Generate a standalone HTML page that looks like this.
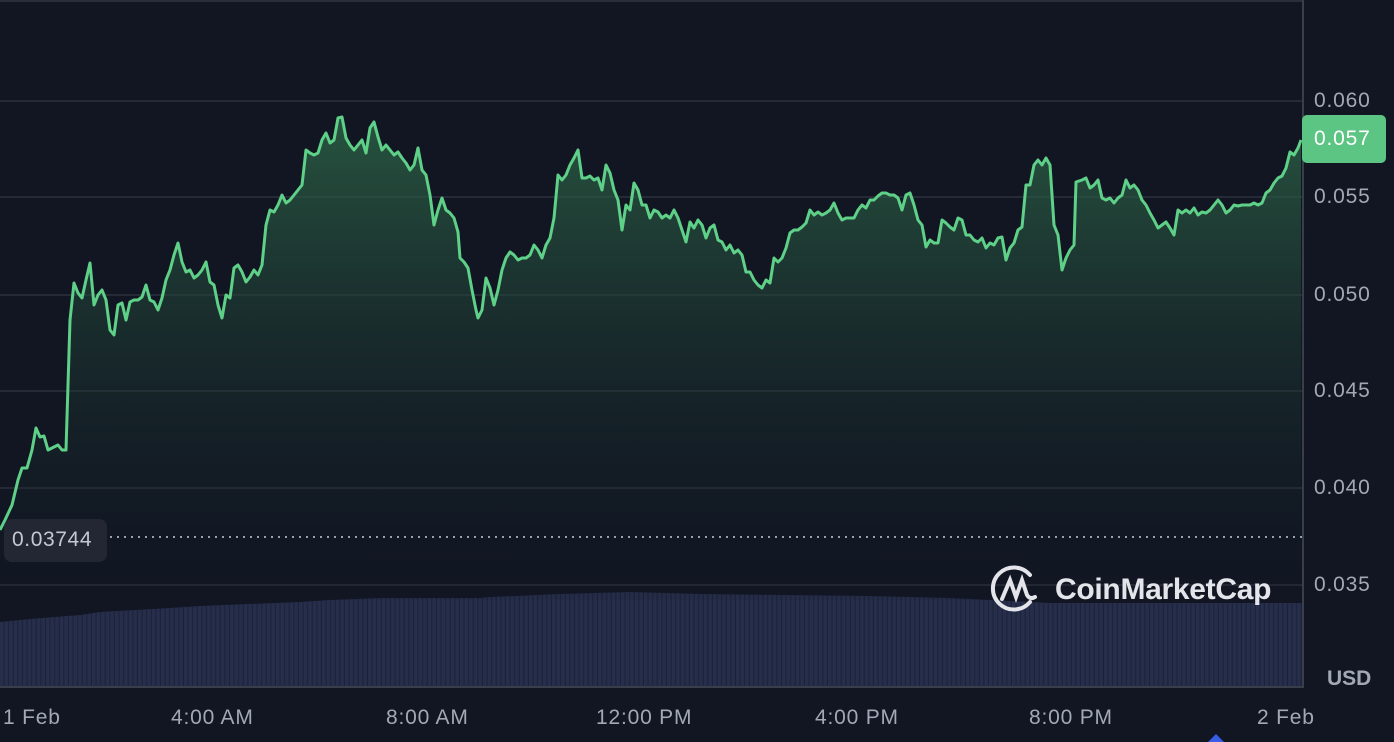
<!DOCTYPE html>
<html><head><style>
html,body{margin:0;padding:0;background:#111622;width:1394px;height:742px;overflow:hidden;font-family:"Liberation Sans",sans-serif}
.lab{position:absolute;color:#a3a8b5;font-size:21px;letter-spacing:0.8px}
</style></head><body>
<svg width="1394" height="742" style="position:absolute;left:0;top:0">
<defs>
<linearGradient id="g" x1="0" y1="0" x2="0" y2="1">
<stop offset="0" stop-color="#2f6a4a" stop-opacity="0.75"/>
<stop offset="1" stop-color="#111622" stop-opacity="0.1"/>
</linearGradient>
<pattern id="bars" width="4.6" height="10" patternUnits="userSpaceOnUse">
<rect width="3.6" height="10" fill="#262e4c"/><rect x="3.6" width="1" height="10" fill="#1c2237"/>
</pattern>
</defs>
<line x1="0" y1="1" x2="1302" y2="1" stroke="#2a2e3a" stroke-width="2"/>
<g stroke="#2c303c" stroke-width="1.5">
<line x1="0" y1="101" x2="1302" y2="101"/><line x1="0" y1="197" x2="1302" y2="197"/>
<line x1="0" y1="295" x2="1302" y2="295"/><line x1="0" y1="391" x2="1302" y2="391"/>
<line x1="0" y1="488" x2="1302" y2="488"/><line x1="0" y1="585" x2="1302" y2="585"/>
</g>
<polygon fill="url(#bars)" points="0,622 30,619 80,615 100,612 170,608 200,606 300,602 330,600 380,598 480,598 490,597 560,594 630,592 700,594 870,596 950,598 1050,603 1302,603 1302,686 0,686"/>
<path fill="url(#g)" d="M0,530 L5,520 12,505 18,480 22,468 27,468 32,450 36,428 40,437 44,436 48,450 54,447 58,445 62,450 66,450 70,320 74,283 78,293 82,298 86,280 90,263 94,305 98,295 102,290 106,300 110,330 114,335 118,305 122,303 126,320 130,302 134,300 138,300 142,297 146,285 150,300 154,302 158,310 162,298 166,280 170,270 174,255 178,243 182,262 186,272 190,270 194,278 198,275 202,270 206,262 210,282 214,285 218,305 222,318 226,295 230,298 234,268 238,265 242,272 246,282 250,277 254,270 258,275 262,265 266,225 270,210 274,212 278,205 282,195 286,203 290,200 294,195 298,190 302,185 306,150 310,153 314,155 318,153 322,140 326,133 330,143 334,140 338,118 342,117 346,138 350,145 354,150 358,145 362,140 366,153 370,128 374,122 378,137 382,150 386,145 390,150 394,155 398,152 402,158 406,163 410,170 414,165 418,148 422,170 426,175 430,195 434,225 438,210 442,198 446,210 450,213 454,218 458,232 460,258 464,262 468,268 472,290 476,310 478,318 482,310 486,278 490,288 494,305 498,290 502,270 506,258 510,252 514,255 518,260 522,258 526,258 530,255 534,245 538,250 542,258 546,245 550,238 554,218 558,175 562,180 566,175 570,165 574,158 578,150 582,178 586,178 590,176 594,180 598,178 602,190 606,165 610,173 614,190 618,200 622,230 626,205 630,210 634,183 638,190 642,205 646,205 650,218 654,210 658,212 662,218 666,215 670,218 674,210 678,218 682,230 686,242 690,222 694,228 698,220 702,225 706,238 710,228 714,225 718,240 722,242 726,250 730,245 734,253 738,250 742,255 746,272 750,272 754,280 758,285 762,288 766,280 770,283 774,258 778,262 782,258 786,248 790,233 794,230 798,230 802,227 806,223 810,210 814,215 818,212 822,215 826,213 830,210 834,203 838,213 842,220 846,218 850,218 854,218 858,210 862,205 866,208 870,200 874,200 878,196 882,193 886,193 890,195 894,195 898,198 902,210 906,195 910,193 914,205 918,220 922,225 926,247 930,240 934,243 938,243 942,220 946,223 950,227 954,230 958,218 962,220 966,235 970,235 974,240 978,242 982,238 986,248 990,243 994,245 998,238 1002,237 1006,260 1010,248 1014,243 1018,230 1022,227 1026,185 1030,185 1034,165 1038,160 1042,165 1046,158 1050,165 1054,225 1058,235 1062,270 1066,258 1070,250 1074,245 1076,182 1082,180 1086,178 1090,188 1094,185 1098,180 1102,198 1106,200 1110,198 1114,203 1118,198 1122,195 1126,180 1130,188 1134,185 1138,190 1142,200 1146,205 1150,213 1154,220 1158,228 1162,225 1166,222 1170,228 1174,235 1178,210 1182,213 1186,210 1190,213 1194,208 1198,215 1202,212 1206,213 1210,210 1214,205 1218,200 1222,205 1226,213 1230,210 1234,205 1238,206 1242,205 1246,205 1250,205 1254,203 1258,205 1262,203 1266,193 1270,190 1274,183 1278,178 1282,176 1286,168 1290,152 1294,155 1298,148 1301,140 L1301,600 0,600Z"/>
<polyline fill="none" stroke="#5ed088" stroke-width="3" stroke-linejoin="round" points="0,530 5,520 12,505 18,480 22,468 27,468 32,450 36,428 40,437 44,436 48,450 54,447 58,445 62,450 66,450 70,320 74,283 78,293 82,298 86,280 90,263 94,305 98,295 102,290 106,300 110,330 114,335 118,305 122,303 126,320 130,302 134,300 138,300 142,297 146,285 150,300 154,302 158,310 162,298 166,280 170,270 174,255 178,243 182,262 186,272 190,270 194,278 198,275 202,270 206,262 210,282 214,285 218,305 222,318 226,295 230,298 234,268 238,265 242,272 246,282 250,277 254,270 258,275 262,265 266,225 270,210 274,212 278,205 282,195 286,203 290,200 294,195 298,190 302,185 306,150 310,153 314,155 318,153 322,140 326,133 330,143 334,140 338,118 342,117 346,138 350,145 354,150 358,145 362,140 366,153 370,128 374,122 378,137 382,150 386,145 390,150 394,155 398,152 402,158 406,163 410,170 414,165 418,148 422,170 426,175 430,195 434,225 438,210 442,198 446,210 450,213 454,218 458,232 460,258 464,262 468,268 472,290 476,310 478,318 482,310 486,278 490,288 494,305 498,290 502,270 506,258 510,252 514,255 518,260 522,258 526,258 530,255 534,245 538,250 542,258 546,245 550,238 554,218 558,175 562,180 566,175 570,165 574,158 578,150 582,178 586,178 590,176 594,180 598,178 602,190 606,165 610,173 614,190 618,200 622,230 626,205 630,210 634,183 638,190 642,205 646,205 650,218 654,210 658,212 662,218 666,215 670,218 674,210 678,218 682,230 686,242 690,222 694,228 698,220 702,225 706,238 710,228 714,225 718,240 722,242 726,250 730,245 734,253 738,250 742,255 746,272 750,272 754,280 758,285 762,288 766,280 770,283 774,258 778,262 782,258 786,248 790,233 794,230 798,230 802,227 806,223 810,210 814,215 818,212 822,215 826,213 830,210 834,203 838,213 842,220 846,218 850,218 854,218 858,210 862,205 866,208 870,200 874,200 878,196 882,193 886,193 890,195 894,195 898,198 902,210 906,195 910,193 914,205 918,220 922,225 926,247 930,240 934,243 938,243 942,220 946,223 950,227 954,230 958,218 962,220 966,235 970,235 974,240 978,242 982,238 986,248 990,243 994,245 998,238 1002,237 1006,260 1010,248 1014,243 1018,230 1022,227 1026,185 1030,185 1034,165 1038,160 1042,165 1046,158 1050,165 1054,225 1058,235 1062,270 1066,258 1070,250 1074,245 1076,182 1082,180 1086,178 1090,188 1094,185 1098,180 1102,198 1106,200 1110,198 1114,203 1118,198 1122,195 1126,180 1130,188 1134,185 1138,190 1142,200 1146,205 1150,213 1154,220 1158,228 1162,225 1166,222 1170,228 1174,235 1178,210 1182,213 1186,210 1190,213 1194,208 1198,215 1202,212 1206,213 1210,210 1214,205 1218,200 1222,205 1226,213 1230,210 1234,205 1238,206 1242,205 1246,205 1250,205 1254,203 1258,205 1262,203 1266,193 1270,190 1274,183 1278,178 1282,176 1286,168 1290,152 1294,155 1298,148 1301,140"/>
<line x1="110" y1="537" x2="1302" y2="537" stroke="#9aa0ad" stroke-width="2" stroke-dasharray="2,5"/>
<rect x="4" y="519" width="103" height="43" rx="8" fill="#232733"/>
<line x1="1303" y1="0" x2="1303" y2="688" stroke="#3a3e4a" stroke-width="2"/>
<line x1="0" y1="687" x2="1303" y2="687" stroke="#3a3e4a" stroke-width="2"/>
<rect x="1302" y="115" width="84" height="48" rx="5" fill="#5cc583"/>
<g fill="none" stroke="#e3e5ea" stroke-width="4" stroke-linecap="round">
<path d="M1030,602 A21,21 0 1 1 1030,575"/>
<path d="M1002,599 L1010,580 L1016,597 L1022,580 L1027,595 Q1030,600 1035,597"/>
</g>
<polygon points="1208,742 1216,734 1224,742" fill="#3b5de5"/>
</svg>
<div class="lab" style="left:12px;top:528px;color:#c4c8d2;letter-spacing:0.6px">0.03744</div>
<div class="lab" style="left:1314px;top:89px">0.060</div>
<div class="lab" style="left:1314px;top:185px">0.055</div>
<div class="lab" style="left:1314px;top:283px">0.050</div>
<div class="lab" style="left:1314px;top:379px">0.045</div>
<div class="lab" style="left:1314px;top:476px">0.040</div>
<div class="lab" style="left:1314px;top:573px">0.035</div>
<div class="lab" style="left:1314px;top:127px;color:#fff">0.057</div>
<div class="lab" style="left:1327px;top:667px;font-weight:bold;font-size:21px;letter-spacing:0">USD</div>
<div style="position:absolute;left:1055px;top:573px;color:#e3e5ea;font-size:30px;font-weight:bold;letter-spacing:-0.3px">CoinMarketCap</div>
<div class="lab" style="left:3px;top:706px">1 Feb</div>
<div class="lab" style="left:171px;top:706px">4:00 AM</div>
<div class="lab" style="left:386px;top:706px">8:00 AM</div>
<div class="lab" style="left:596px;top:706px">12:00 PM</div>
<div class="lab" style="left:815px;top:706px">4:00 PM</div>
<div class="lab" style="left:1029px;top:706px">8:00 PM</div>
<div class="lab" style="left:1257px;top:706px">2 Feb</div>
</body></html>
